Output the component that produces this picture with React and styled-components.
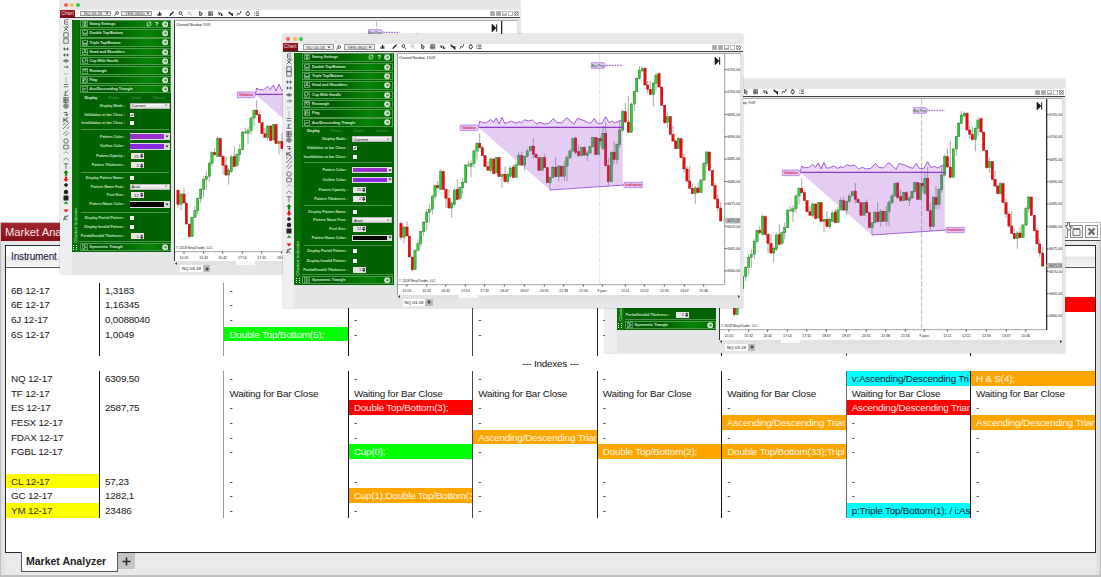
import React from "react";
import styled, { createGlobalStyle } from "styled-components";

const GlobalStyle = createGlobalStyle`
  * { box-sizing: border-box; }
  html, body { margin: 0; padding: 0; background: #fff; overflow: hidden; }
  body { font-family: "Liberation Sans", Arial, sans-serif; color: #111; }
  svg { display: block; }
`;

/* ---------- desktop ---------- */

const Desktop = styled.div`
  position: relative;
  width: 1101px;
  height: 577px;
  overflow: hidden;
  padding-top: 222px;
`;

/* ---------- market analyzer ---------- */

const Analyzer = styled.section`
  height: 355px;
  display: flex;
  flex-direction: column;
  border: 1px solid #bcbec0;
  border-bottom-width: 2px;
  background: linear-gradient(90deg, #dcdee0, #e9eaec 6px, #e9eaec 1094px, #d8dadc);
`;

const AnalyzerBar = styled.header`
  height: 18px;
  flex: none;
  display: flex;
  align-items: center;
  justify-content: space-between;
  background: #fff;
  border-bottom: 1px solid #44484a;
  padding-right: 2px;
`;

const AnalyzerTitle = styled.div`
  height: 18px;
  width: 96px;
  padding-left: 4px;
  line-height: 18px;
  font-size: 11.2px;
  white-space: nowrap;
  color: #f6e6e6;
  background: linear-gradient(#a3262e, #851019);
`;

const BarButtons = styled.div`
  display: flex;
  gap: 2px;
`;

const BarButton = styled.div`
  width: 13px;
  height: 13px;
  border: 1px solid #8b8b8b;
  background: #f3f3f3;
`;

const AnalyzerBody = styled.div`
  height: 308px;
  flex: none;
  margin: 4px 4px 0 4px;
  border: 1px solid #26282a;
  background: #fff;
`;

const HeaderRow = styled.div`
  height: 22px;
  border-bottom: 1px solid #55585a;
  background: linear-gradient(#fff 45%, #e6e6e6 55%, #f8f8f8);
  font-size: 10px;
  letter-spacing: -0.15px;
  line-height: 22px;
  padding-left: 5px;
  color: #0c0c3c;
`;

const Grid = styled.div`
  padding-top: 14.7px;
  font-size: 9.9px;
  letter-spacing: -0.2px;
`;

const Row = styled.div`
  height: 14.7px;
  display: grid;
  grid-template-columns: 93px repeat(8, 124.45px);
`;

const fills = {
  yellow: ["#ffff00", "#333300"],
  green: ["#00ff00", "#f4fff4"],
  red: ["#ff0000", "#ffeaea"],
  orange: ["#ffa500", "#fff6e4"],
  cyan: ["#00ffff", "#06202a"],
};

const Cell = styled.div`
  overflow: hidden;
  white-space: nowrap;
  line-height: 15.6px;
  padding-left: 5px;
  border-left: ${(p) => (p.$line ? `1px solid ${p.$line}` : "none")};
  background: ${(p) => (p.$fill ? fills[p.$fill][0] : "transparent")};
  color: ${(p) => (p.$fill ? fills[p.$fill][1] : "#161616")};
`;

const GroupRow = styled.div`
  height: 14.7px;
  line-height: 15.6px;
  text-align: center;
`;

const AnalyzerTabs = styled.div`
  display: flex;
  align-items: flex-start;
  margin: -1px 0 0 20px;
`;

const AnalyzerTab = styled.div`
  width: 97px;
  height: 20px;
  padding-left: 4px;
  border: 1px solid #55585a;
  border-top: none;
  background: #fff;
  font-size: 10.5px;
  font-weight: bold;
  line-height: 19px;
  color: #222;
`;

const AnalyzerPlus = styled.div`
  width: 17px;
  height: 16px;
  margin-top: 1px;
  background: #c2c3c5;
  display: grid;
  place-items: center;
`;

const D = "-";
const W = "Waiting for Bar Close";
const AD = "Ascending/Descending Trian";
const dashes = [D, D, D, D, D, D, D];
const waits = [W, W, W, W, W, W, W];

const rows = [
  { name: "6B 12-17", price: "1,3183", cells: dashes },
  { name: "6E 12-17", price: "1,16345", cells: [D, D, D, D, D, D, ["red", ""]] },
  { name: "6J 12-17", price: "0,0088040", cells: dashes },
  { name: "6S 12-17", price: "1,0049", cells: [["green", "Double Top/Bottom(5);"], D, D, D, D, D, D] },
  { cells: [] },
  { group: "--- Indexes ---" },
  { name: "NQ 12-17", price: "6309,50", cells: [D, D, D, D, D, ["cyan", "v:Ascending/Descending Tri"], ["orange", "H & S(4);"]] },
  { name: "TF 12-17", price: "", cells: waits },
  { name: "ES 12-17", price: "2587,75", cells: [D, ["red", "Double Top/Bottom(3);"], D, D, D, ["red", AD], D] },
  { name: "FESX 12-17", price: "", cells: [D, D, D, D, ["orange", AD], D, ["orange", AD]] },
  { name: "FDAX 12-17", price: "", cells: [D, D, ["orange", AD], D, D, D, D] },
  { name: "FGBL 12-17", price: "", cells: [D, ["green", "Cup(0);"], D, ["orange", "Double Top/Bottom(2);"], ["orange", "Double Top/Bottom(33);Tripl"], D, D] },
  { cells: [] },
  { name: "CL 12-17", mark: "yellow", price: "57,23", cells: dashes },
  { name: "GC 12-17", price: "1282,1", cells: [D, ["orange", "Cup(1);Double Top/Bottom(3"], D, D, D, D, D] },
  { name: "YM 12-17", mark: "yellow", price: "23486", cells: [D, D, D, D, D, ["cyan", "p:Triple Top/Bottom(1); / i:As"], D] },
];

const lineColors = ["#999", "#111", "#444", "#222", "#111", "#666", "#111"];

function MarketAnalyzer() {
  return (
    <Analyzer>
      <AnalyzerBar>
        <AnalyzerTitle>Market Analyzer</AnalyzerTitle>
        <BarButtons>
          <BarButton>
            <svg width="11" height="11" viewBox="0 0 11 11" fill="none" stroke="#777">
              <path d="M2 8.500h6" />
            </svg>
          </BarButton>
          <BarButton>
            <svg width="11" height="11" viewBox="0 0 11 11" fill="none" stroke="#777" overflow="visible">
              <path d="M2 3.500h7v6H2zM2 2.500h7" />
              <path d="M-3.500 -3.500v3l-2 0 3 5 4-3.500h-3v-4.500z" fill="#fff" stroke="#667" />
            </svg>
          </BarButton>
          <BarButton>
            <svg width="11" height="11" viewBox="0 0 11 11" stroke="#666" strokeWidth="2">
              <path d="M2.500 2.500l6 6M8.500 2.500l-6 6" />
            </svg>
          </BarButton>
        </BarButtons>
      </AnalyzerBar>
      <AnalyzerBody>
        <HeaderRow>Instrument</HeaderRow>
        <Grid>
          {rows.map((r, i) =>
            r.group ? (
              <GroupRow key={i}>{r.group}</GroupRow>
            ) : (
              <Row key={i}>
                <Cell $fill={r.mark}>{r.name}</Cell>
                <Cell $line="#111">{r.price}</Cell>
                {lineColors.map((line, c) => {
                  const v = r.cells[c];
                  const filled = Array.isArray(v);
                  return (
                    <Cell key={c} $line={line} $fill={filled ? v[0] : undefined}>
                      {filled ? v[1] : v}
                    </Cell>
                  );
                })}
              </Row>
            )
          )}
        </Grid>
      </AnalyzerBody>
      <AnalyzerTabs>
        <AnalyzerTab>Market Analyzer</AnalyzerTab>
        <AnalyzerPlus>
          <svg width="9" height="9" viewBox="0 0 9 9" stroke="#2b2b2b" strokeWidth="1.6">
            <path d="M4.500 .5v8M.5 4.500h8" />
          </svg>
        </AnalyzerPlus>
      </AnalyzerTabs>
    </Analyzer>
  );
}

/* ---------- chart window frame ---------- */

const Frame = styled.section`
  position: absolute;
  left: ${(p) => p.$x}px;
  top: ${(p) => p.$y}px;
  width: 460px;
  height: 274px;
  display: flex;
  flex-direction: column;
  overflow: hidden;
  border-radius: 2px;
  background: #e5e6e8;
  box-shadow: 0 0 1.5px rgba(0, 0, 0, 0.45);
`;

const TitleBar = styled.div`
  height: 10px;
  flex: none;
  display: flex;
  align-items: center;
  gap: 2.3px;
  padding-left: 3.8px;
  background: #e7e7e7;
`;

const Dot = styled.i`
  width: 4px;
  height: 4px;
  border-radius: 50%;
  background: ${(p) => p.$color};
`;

const Toolbar = styled.div`
  height: 8px;
  flex: none;
  display: flex;
  align-items: center;
  background: #fff;
  border-bottom: 1px solid #3c463c;
`;

const ChartTag = styled.div`
  width: 15px;
  height: 8px;
  margin-right: 5px;
  background: linear-gradient(#9c1c28, #7a0c16);
  color: #f0d8da;
  font-size: 5.2px;
  line-height: 7.5px;
  text-align: center;
`;

const Picker = styled.div`
  width: 31px;
  height: 5.6px;
  display: flex;
  align-items: center;
  justify-content: space-between;
  padding: 0 1.5px 0 3px;
  border: 0.6px solid #999;
  background: #f0f0f0;
  font-size: 4.2px;
  white-space: nowrap;
  color: #333;
`;

const Find = styled.div`
  width: 10px;
  display: grid;
  place-items: center;
`;

const ToolSlot = styled.div`
  width: ${(p) => p.$w}px;
  display: flex;
  justify-content: flex-end;
`;

const WinButtons = styled.div`
  margin-left: auto;
  display: flex;
  gap: 1px;
  padding-right: 1.5px;
`;

const WinButton = styled.i`
  width: 5px;
  height: 5px;
  border: 0.6px solid #b4b4b4;
  background: ${(p) => (p.$solid ? "#a8a8a8" : "#fff")};
  display: grid;
  place-items: center;
`;

const FrameBody = styled.div`
  flex: 1;
  min-height: 0;
  display: flex;
`;

const Strip = styled.div`
  width: 11.5px;
  flex: none;
  padding: 1.3px 0 0 1px;
  display: flex;
  flex-direction: column;
  align-items: center;
  background: #eceef0;
`;

const StripIcon = styled.svg`
  width: 6px;
  height: 6px;
  flex: none;
  margin-top: ${(p) => p.$gap}px;
`;

const Arrow = ({ color = "#444" }) => (
  <svg width="4" height="3" viewBox="0 0 4 3">
    <path d="M.4.5h3.200L2 2.600z" fill={color} />
  </svg>
);

const toolbarIcons = [
  [10.5, "M1.500 7V4M3.500 7V1M5.500 7V2.500", 1.6],
  [12, "M1 7L6 1.500M1.500 7l1-2.500L7 1", 1.6],
  [9, "M1.500 3a2 2 0 1 0 4 0a2 2 0 1 0-4 0M5 5l3 3", 1.2],
  [9, "M1.500 3a2 2 0 1 0 4 0a2 2 0 1 0-4 0M5 5l3 3", 0.4],
  [10.5, "M2.500 0.500v6L4 5.500l1.500 2.500M2.500.5l4 4H4.500", 1.3],
  [10, "M1 1h6v6H1zM1 3h6M1 5h6M3 1v6", 0.9],
  [10, "M0 3h4M4 6h4M1 5h2M5 3v4", 1.4],
  [10, "M1 1l3 3M4 4h3v3zM2 1v3", 1.8],
  [8.5, "M1 7l2-4 2 2 2-4M6 1h2", 1.1],
  [9, "M1.500 4a2.500 2.500 0 1 0 5 0a2.500 2.500 0 1 0-5 0M3 1h2M3 7h2", 1.2],
  [8.5, "M0 1.500h1M2.500 1.500H8M0 4h1M2.500 4H8M0 6.500h1M2.500 6.500H8", 1],
];

const stripIcons = [
  [0, "M2 1v6M3 1h4M3 4h4M3 7h4"],
  [0.4, "M1 1l6 6M7 1L1 7M3 1h4"],
  [0.6, "M1 1h6v6H1z"],
  [-0.3, "M1 1h6v6H1z"],
  [2, "M0 4h8M2 2v4M6 2v4"],
  [0, "M0 4h8M2 2v4M6 2v4"],
  [0.3, "M0 4h8M1 4l2-2v4M7 4L5 2v4"],
  [0, "M1 4h6M5 2l2 2-2 2"],
  [1, "M1 4h6", "#999"],
  [0, "M4 0v8", "#999"],
  [0, "M1 2h6M1 5h6"],
  [0.7, "M1 7h6M3 1v6M3 4l4-3"],
  [1.3, "M0 1h8M0 3h8M0 5h8M0 7h8M3 0v8"],
  [0, "M1 4a3 3 0 1 0 6 0a3 3 0 1 0-6 0M1 4h6M4 1v6"],
  [2, "M1 2h4M5 1v6M2 5h5"],
  [0, "M1 1v6M1 4l6-3M1 4l6 3M3 2l3 4"],
  [0, "M0 3l3-3M0 8l8-8M5 8l3-3"],
  [0.4, "M0 6l5-5M3 8l5-5"],
  [2, "M1 4a3 3 0 1 0 6 0a3 3 0 1 0-6 0"],
  [0.3, "M1 1.500h6v5H1z"],
  [-0.3, "M1 5l3-3 3 3", "#777"],
  [0, "M1 6c1-4 5-4 6 0", "#555"],
  [1, "M1 1h6M4 1v7"],
  [1.6, "M4 0l3.500 4H5.500v3.500h-3V4H.5z", "#078a07", true],
  [0, "M4 8l3.500-4H5.500V.5h-3V4H.5z", "#ee1111", true],
  [0, "M4 1l3 3-3 3-3-3z", "#222", true],
  [0.4, "M1 4a3 3 0 1 0 6 0a3 3 0 1 0-6 0", "#222", true],
  [0, "M.7 .7h6.600v6.600h-6.600z", "#222", true],
  [-0.4, "M4 1.500l3 3.500h-6z", "#078a07", true],
  [2, "M4 6l3.500-4h-7z", "#ee1111", true],
  [0.7, "M1 7l5-6M2 4l4 3M1 7l1-5 5-1"],
];

/* ---------- indicator panel ---------- */

const Panel = styled.aside`
  width: 99.5px;
  height: 232px;
  margin-top: 1.5px;
  flex: none;
  display: flex;
  background: #006200;
`;

const Spine = styled.div`
  width: 7px;
  display: flex;
  flex-direction: column;
  align-items: center;
  justify-content: flex-end;
  gap: 2px;
  padding-bottom: 2px;
  background: #067206;
`;

const SpineText = styled.div`
  writing-mode: vertical-rl;
  transform: rotate(180deg);
  font-size: 4.3px;
  line-height: 5px;
  letter-spacing: 0.1px;
  color: #d0ecd0;
  white-space: nowrap;
`;

const Sections = styled.div`
  flex: 1;
  min-width: 0;
  display: flex;
  flex-direction: column;
  padding: 0.3px 0.5px 0 1px;
`;

const SectionHead = styled.div`
  height: 8.4px;
  margin-bottom: 0.93px;
  flex: none;
  display: flex;
  align-items: center;
  gap: 2px;
  padding: 0 1.2px 0 1px;
  border: 0.6px solid #4f9c4f;
  background: linear-gradient(95deg, #005a00 35%, #078507 75%, #006800);
  color: #d8f0d8;
  font-size: 3.65px;
  font-weight: bold;
  white-space: nowrap;
`;

const HeadTools = styled.div`
  margin-left: auto;
  display: flex;
  align-items: center;
  gap: 3.5px;
`;

const Help = styled.b`
  font-size: 5.5px;
  color: #fff;
`;

const TabRow = styled.div`
  height: 7.4px;
  flex: none;
  display: grid;
  grid-template-columns: repeat(4, 1fr);
  align-items: center;
  text-align: center;
  font-size: 3.6px;
  font-weight: bold;
`;

const PanelTab = styled.span`
  color: ${(p) => (p.$on ? "#e8ffe8" : "#378f37")};
`;

const Field = styled.div`
  height: ${(p) => p.$h}px;
  flex: none;
  display: grid;
  grid-template-columns: 45.5px 1fr;
  column-gap: 4.5px;
  align-items: center;
`;

const FieldLabel = styled.span`
  font-size: 3.6px;
  font-weight: bold;
  white-space: nowrap;
  display: flex;
  justify-content: flex-end;
  color: #c8e8c8;
`;

const Rule = styled.div`
  height: 1px;
  flex: none;
  margin: ${(p) => p.$m};
  background: #4f944f;
`;

const SelectBox = styled.div`
  width: 40px;
  height: 6px;
  display: flex;
  align-items: center;
  justify-content: space-between;
  padding: 0 1px;
  border: 0.5px solid #bbb;
  background: linear-gradient(#fafafa, #dcdcdc);
  color: #111;
  font-size: 4.2px;
`;

const Check = styled.div`
  width: 4px;
  height: 4px;
  margin-left: 0.5px;
  background: #fff;
  display: grid;
  place-items: center;
`;

const Spin = styled.div`
  width: 13px;
  height: 6px;
  display: flex;
  align-items: center;
  justify-content: flex-end;
  gap: 1px;
  padding-right: 0.4px;
  margin-left: 1px;
  background: #e6e6e6;
  color: #222;
  font-size: 4px;
`;

const ColorBox = styled.div`
  width: 40px;
  height: 6.6px;
  display: flex;
  align-items: center;
  background: #ddd;
`;

const Swatch = styled.div`
  width: 34px;
  height: 4.6px;
  flex: none;
  margin: 0 1px 0 0.8px;
  background: ${(p) => p.$color};
`;

const Gear = () => (
  <svg width="6.4" height="6.4" viewBox="0 0 8 8">
    <circle cx="4" cy="4" r="3.800" fill="#d4e6d4" />
    <path d="M2.200 4h3.600M4 2.200L5.800 4 4 5.800" fill="none" stroke="#286028" strokeWidth="0.9" />
  </svg>
);

const HeadIcon = ({ d }) => (
  <svg width="6" height="6" viewBox="0 0 8 8" fill="none" stroke="#d0ead0" strokeWidth="0.9">
    <path d="M.6.6h6.800v6.800H.6z" strokeWidth="0.6" />
    <path d={d} />
  </svg>
);

const sections = [
  ["Swing Settings", "M2 2h4M2 4h4M2 6h4M4 1v6"],
  ["Double Top/Bottom", "M1 2l2 4 1-2 1 2 2-4"],
  ["Triple Top/Bottom", "M1 2l1 4 1-2 1 2 1-2 1 2 1-4"],
  ["Head and Shoulders", "M1 6l1-2 1 1 1-4 1 4 1-1 1 2"],
  ["Cup With Handle", "M1 2c1 5 3 5 4 0l2 2"],
  ["Rectangle", "M1 5l2-2 2 2 2-2M1 2h6"],
  ["Flag", "M2 7V2l4 1-4 2M5 6l2-1"],
  ["Asc/Descending Triangle", "M1 6l2-3 1 2 3-3"],
];

function Head({ label, d, first }) {
  return (
    <SectionHead>
      <HeadIcon d={d} />
      {label}
      <HeadTools>
        {first && (
          <>
            <svg width="6" height="6" viewBox="0 0 8 8" fill="none" stroke="#d8f0d8" strokeWidth="1">
              <path d="M1.200 4a2.800 2.800 0 0 1 5-1.600M6.800 4a2.800 2.800 0 0 1-5 1.600M6.500 1v2h-2M1.500 7V5h2" />
            </svg>
            <Help>?</Help>
          </>
        )}
        <Gear />
      </HeadTools>
    </SectionHead>
  );
}

function LabeledField({ label, h, children }) {
  return (
    <Field $h={h}>
      <FieldLabel>{label} :</FieldLabel>
      {children}
    </Field>
  );
}

const Checkbox = ({ on }) => (
  <Check>
    {on && (
      <svg width="4" height="4" viewBox="0 0 4 4" fill="none" stroke="#000" strokeWidth="0.8">
        <path d="M.6 2l1 1L3.400.8" />
      </svg>
    )}
  </Check>
);

const Stepper = ({ value }) => (
  <Spin>
    {value}
    <svg width="3.500" height="5.500" viewBox="0 0 4 6">
      <path d="M0 2.600L2 .3l2 2.300zM0 3.400h4L2 5.700z" fill="#222" />
    </svg>
  </Spin>
);

const ColorPick = ({ color }) => (
  <ColorBox>
    <Swatch $color={color} />
    <Arrow color="#222" />
  </ColorBox>
);

function IndicatorPanel() {
  return (
    <Panel>
      <Spine>
        <SpineText>Charted Indicator</SpineText>
        <svg width="4" height="5" viewBox="0 0 4 5" fill="#e8ffe8">
          <path d="M0 0h1v1H0zM3 0h1v1H3zM0 2h1v1H0zM3 2h1v1H3zM0 4h1v1H0zM3 4h1v1H3z" />
        </svg>
      </Spine>
      <Sections>
        {sections.map(([label, d], i) => (
          <Head key={label} label={label} d={d} first={i === 0} />
        ))}
        <TabRow>
          <PanelTab $on>Display</PanelTab>
          <PanelTab>Points</PanelTab>
          <PanelTab>Guide</PanelTab>
          <PanelTab>Volume</PanelTab>
        </TabRow>
        <LabeledField label="Display Mode" h={8.6}>
          <SelectBox>
            Current <Arrow color="#999" />
          </SelectBox>
        </LabeledField>
        <LabeledField label="Validation at bar Close" h={8.6}>
          <Checkbox on />
        </LabeledField>
        <LabeledField label="Invalidation at bar Close" h={8.8}>
          <Checkbox />
        </LabeledField>
        <Rule $m="1.2px 1.5px 1.8px" />
        <LabeledField label="Pattern Color" h={9.8}>
          <ColorPick color="#9932cc" />
        </LabeledField>
        <LabeledField label="Outline Color" h={9.8}>
          <ColorPick color="#8a2be2" />
        </LabeledField>
        <LabeledField label="Pattern Opacity" h={9.5}>
          <Stepper value="25" />
        </LabeledField>
        <LabeledField label="Pattern Thickness" h={9.3}>
          <Stepper value="2" />
        </LabeledField>
        <Rule $m="1.8px 1.5px 1.2px" />
        <LabeledField label="Display Pattern Name" h={8.6}>
          <Checkbox />
        </LabeledField>
        <LabeledField label="Pattern Name Font" h={8.3}>
          <SelectBox>
            Arial <Arrow color="#999" />
          </SelectBox>
        </LabeledField>
        <LabeledField label="Font Size" h={8.5}>
          <Stepper value="12" />
        </LabeledField>
        <LabeledField label="Pattern Name Color" h={10}>
          <ColorPick color="#000" />
        </LabeledField>
        <Rule $m="2.2px 1.5px 0.8px" />
        <LabeledField label="Display Partial Pattern" h={9}>
          <Checkbox />
        </LabeledField>
        <LabeledField label="Display Invalid Pattern" h={9.2}>
          <Checkbox />
        </LabeledField>
        <LabeledField label="Partial/Invalid Thickness" h={9.4}>
          <Stepper value="1" />
        </LabeledField>
        <Rule $m="0 0 0.6px" />
        <Head label="Symmetric Triangle" d="M1 1l5 3-5 3M3 3v2" />
      </Sections>
    </Panel>
  );
}

/* ---------- price chart ---------- */

const ChartColumn = styled.div`
  width: 344px;
  margin: 1.5px 0 0 3.3px;
  display: flex;
  flex-direction: column;
`;

const ChartBox = styled.div`
  height: 241.5px;
  border-top: 0.7px solid #aaa;
  border-left: 0.8px solid ${(p) => p.$edge};
  background: #fff;
`;

const Scroll = styled.div`
  height: 4px;
  flex: none;
  display: flex;
  align-items: center;
  justify-content: space-between;
  padding: 0 1px;
  background: #e2e2e2;
`;

const Thumb = styled.div`
  width: 19px;
  height: 3.6px;
  margin-left: 59px;
  margin-right: auto;
  background: #fafafa;
`;

const Tabs = styled.div`
  display: flex;
  padding-left: 6px;
`;

const Tab = styled.div`
  width: 22.5px;
  height: 7px;
  background: #fff;
  font-size: 4.4px;
  line-height: 7px;
  text-align: center;
  color: #111;
`;

const TabPlus = styled.div`
  width: 7.5px;
  height: 7px;
  display: grid;
  place-items: center;
  background: #bcbcbc;
`;

/* each bar: x, open, close, high, low (y grows downwards, so a rising bar closes at a smaller value) */
const bars = [
  [18, 577, 619, 572, 628], [27, 619, 588, 585, 638], [36, 588, 615, 570, 615], [43, 615, 678, 615, 680],
  [52, 678, 716, 678, 722], [60, 716, 658, 655, 716], [69, 658, 638, 625, 660], [77, 638, 602, 600, 648],
  [86, 602, 574, 570, 615], [95, 574, 544, 535, 598], [103, 544, 535, 520, 575], [112, 535, 496, 490, 550],
  [120, 496, 464, 460, 505], [128, 464, 470, 450, 475], [137, 475, 422, 415, 478], [145, 422, 475, 418, 478],
  [153, 475, 502, 470, 530], [162, 502, 531, 475, 534], [170, 531, 517, 510, 560], [178, 520, 477, 470, 525],
  [187, 475, 506, 445, 508], [195, 502, 470, 465, 508], [203, 470, 455, 440, 490], [212, 455, 402, 400, 456],
  [220, 404, 402, 390, 408], [228, 406, 398, 388, 438], [237, 398, 360, 355, 410], [246, 360, 337, 333, 385],
  [254, 337, 350, 307, 352], [262, 350, 374, 342, 375], [270, 374, 407, 372, 408], [279, 407, 418, 390, 418],
  [287, 418, 384, 380, 425], [296, 384, 428, 382, 430], [305, 426, 380, 378, 426], [312, 380, 437, 378, 438],
  [321, 437, 430, 428, 470], [330, 430, 452, 405, 454], [338, 452, 430, 425, 458], [346, 436, 411, 405, 440],
  [355, 408, 440, 400, 442], [363, 440, 402, 392, 440], [371, 402, 374, 365, 403], [380, 374, 402, 362, 405],
  [389, 402, 376, 374, 418], [397, 376, 360, 353, 380], [406, 360, 347, 345, 360], [415, 345, 370, 321, 382],
  [423, 370, 380, 365, 380], [432, 380, 418, 378, 420], [441, 418, 380, 378, 418], [449, 380, 410, 370, 412],
  [457, 410, 455, 408, 456], [465, 455, 440, 438, 478], [473, 440, 409, 405, 441], [482, 409, 437, 378, 440],
  [491, 437, 406, 400, 452], [499, 406, 436, 402, 438], [508, 436, 406, 390, 450], [516, 406, 380, 372, 450],
  [525, 380, 360, 354, 385], [534, 360, 323, 320, 362], [542, 321, 364, 317, 370], [551, 362, 374, 340, 378],
  [560, 374, 350, 347, 376], [568, 350, 372, 345, 375], [577, 374, 366, 360, 390], [585, 366, 346, 345, 368],
  [593, 346, 320, 318, 350], [602, 320, 370, 318, 372], [610, 370, 323, 320, 372], [616, 323, 330, 318, 345],
  [624, 353, 307, 286, 356], [632, 307, 404, 273, 406], [640, 404, 452, 380, 464], [649, 452, 364, 360, 455],
  [657, 364, 386, 330, 400], [666, 386, 340, 337, 400], [674, 340, 297, 268, 350], [683, 297, 242, 235, 302],
  [691, 242, 273, 215, 275], [700, 273, 304, 194, 306], [709, 304, 219, 215, 305], [718, 219, 182, 180, 240],
  [725, 182, 142, 138, 182], [733, 142, 117, 105, 145], [742, 120, 113, 107, 122], [750, 112, 162, 108, 164],
  [758, 162, 175, 150, 188], [766, 175, 191, 150, 194], [775, 191, 157, 152, 226], [783, 157, 132, 125, 180],
  [792, 128, 168, 124, 170], [800, 168, 223, 168, 224], [809, 223, 275, 222, 280], [817, 275, 257, 245, 290],
  [826, 257, 310, 255, 313], [834, 310, 330, 285, 334], [842, 330, 353, 325, 355], [850, 353, 323, 318, 355],
  [858, 323, 380, 320, 382], [867, 380, 414, 368, 425], [876, 414, 450, 405, 455], [884, 450, 472, 405, 473],
  [892, 472, 488, 458, 490], [901, 488, 471, 465, 518], [909, 471, 485, 455, 487], [918, 485, 447, 444, 485],
  [927, 447, 397, 392, 450], [935, 397, 363, 360, 408], [943, 363, 418, 362, 420], [952, 418, 464, 417, 466],
  [960, 464, 504, 456, 505], [968, 504, 531, 490, 542], [977, 531, 570, 514, 572],
];

const wave =
  "250,289 254,270 262,275 275,275 287,265 295,274 304,261 312,279 321,259 329,277 338,275 350,270 362,277 372,272 380,275 388,266 400,270 412,267 425,279 435,274 448,279 462,277 475,262 485,274 500,276 515,260 525,268 537,280 547,262 565,268 577,274 587,277 598,262 607,277 621,277 632,257 642,275 652,271 662,276 672,270 683,268";

const times = [
  [36, "15:05"], [95, "15:32"], [152, "16:42"], [211, "17:14"], [269, "17:32"], [328, "18:47"], [388, "19:47"],
  [448, "20:31"], [506, "21:38"], [565, "21:56"], [622, "9 janv."], [691, "11:11"], [748, "12:22"], [808, "12:33"],
  [868, "13:47"], [926, "15:46"],
];
const prices = ["6705,00", "6700,00", "6695,00", "6690,00", "6685,00", "6680,00", "6675,00", "6670,00", "6665,00", "6660,00"];

const ChartText = styled.text`
  font-family: "Liberation Sans", Arial, sans-serif;
  font-size: ${(p) => p.$size || 11}px;
  font-weight: ${(p) => (p.$bold ? "bold" : "normal")};
  text-anchor: ${(p) => p.$anchor || "start"};
  fill: ${(p) => p.$color || "#111"};
`;

function PriceChart({ axis, stamp }) {
  return (
    <svg width="343" height="241" viewBox="9 69 1029 723">
      <rect x="1036" y="69" width="4" height="723" fill="#cfcfcf" />
      <line x1="614" y1="70" x2="614" y2="760" stroke={axis === "#111" ? "#aaa" : "#d8d8d8"} strokeWidth="2.500" strokeDasharray="16 5" />
      {bars.map(([x, o, c, h, l]) => (
        <g key={x}>
          <line x1={x} x2={x} y1={h} y2={l} stroke="#666" strokeWidth="1.700" />
          <rect
            x={x - 3.5}
            y={Math.min(o, c)}
            width="7"
            height={Math.max(Math.abs(o - c), 2)}
            fill={c < o ? "#32cd32" : "#fa0505"}
            stroke={c < o ? "#1f5f1f" : "#7a1010"}
            strokeWidth="1.100"
          />
        </g>
      ))}
      <polygon points="250,289 683,289 683,462 465,477" fill="#9932cc" fillOpacity="0.25" />
      <polygon points={wave + " 683,289"} fill="#9932cc" fillOpacity="0.2" />
      <polyline points={wave} fill="none" stroke="#9a52d2" strokeWidth="2.800" />
      <path d="M250 289H687" stroke="#8a3cc8" strokeWidth="3.500" />
      <path d="M465 477L687 462" stroke="#a060dc" strokeWidth="3" />
      <path d="M196 282h50l6 8-6 9h-50z" fill="#e6c8f4" stroke="#a468dc" strokeWidth="2" />
      <ChartText x="222" y="294" $size={9} $bold $anchor="middle" $color="#d8104c">Validation</ChartText>
      <path d="M684 462l5-8h53v16h-53z" fill="#e6c8f4" stroke="#a468dc" strokeWidth="2" />
      <ChartText x="715" y="466" $size={9} $bold $anchor="middle" $color="#d8104c">Invalidation</ChartText>
      <path d="M589 95h38l6 8-6 9h-38z" fill="#e6c8f4" stroke="#a468dc" strokeWidth="2" />
      <ChartText x="609" y="107" $size={8.5} $bold $anchor="middle" $color="#3f7d52">Buy Prep</ChartText>
      <path d="M634 103H683" stroke="#8a4cc8" strokeWidth="3" strokeDasharray="5 3" />
      <path d="M961 79v22M974 79v22M961 80l10 10-10 10z" fill="#111" stroke="#111" strokeWidth="3" />
      <ChartText x="12" y="83" $size={10.5}>{stamp}</ChartText>
      <ChartText x="12" y="753" $size={10}>© 2018 NinjaTrader, LLC</ChartText>
      <path d="M9 761H989" stroke="#777" strokeWidth="2" />
      <path d="M989 69V762" stroke={axis} strokeWidth="3.500" />
      {times.map(([x, t]) => (
        <g key={x}>
          <path d={`M${x} 761v6`} stroke="#333" strokeWidth="2.500" />
          <ChartText x={x} y="782" $size={10.5} $anchor="middle">{t}</ChartText>
        </g>
      ))}
      {prices.map((p, i) => (
        <g key={p}>
          <path d={`M989 ${116 + i * 67.1}h6`} stroke="#333" strokeWidth="2.500" />
          <ChartText x="997" y={120 + i * 67.1} $size={10.8}>{p}</ChartText>
        </g>
      ))}
      <path d="M986 569l8-7h40v14h-40z" fill="#c4c4c4" stroke="#777" strokeWidth="1.500" />
      <ChartText x="997" y="573" $size={10.5} $color="#333">6671,25</ChartText>
    </svg>
  );
}

function ChartWindow({ x, y, axis, stamp }) {
  return (
    <Frame $x={x} $y={y}>
      <TitleBar>
        <Dot $color="#fc5b57" />
        <Dot $color="#fdbc40" />
        <Dot $color="#2fc840" />
      </TitleBar>
      <Toolbar>
        <ChartTag>Chart</ChartTag>
        <Picker>NQ 03-18 <Arrow /></Picker>
        <Find>
          <svg width="5" height="5" viewBox="0 0 8 8" fill="none" stroke="#333" strokeWidth="1.300">
            <circle cx="5" cy="3" r="2.200" />
            <path d="M3.500 4.500L.5 7.500" />
          </svg>
        </Find>
        <Picker>YEN (800) <Arrow /></Picker>
        {toolbarIcons.map(([w, d, s], i) => (
          <ToolSlot key={i} $w={w}>
            <svg width="5.500" height="5.500" viewBox="0 0 8 8" fill="none" stroke="#222" strokeWidth={s}>
              <path d={d} />
            </svg>
          </ToolSlot>
        ))}
        <WinButtons>
          <WinButton $solid />
          <WinButton $solid />
          <WinButton>
            <svg width="3" height="3" viewBox="0 0 4 4" stroke="#666"><path d="M0 3h4" /></svg>
          </WinButton>
          <WinButton />
          <WinButton>
            <svg width="3" height="3" viewBox="0 0 4 4" stroke="#555"><path d="M0 0l4 4M4 0L0 4" /></svg>
          </WinButton>
        </WinButtons>
      </Toolbar>
      <FrameBody>
        <Strip>
          {stripIcons.map(([gap, d, color = "#333", solid], i) => (
            <StripIcon key={i} $gap={gap} viewBox="0 0 8 8" fill={solid ? color : "none"} stroke={solid ? "none" : color} strokeWidth="0.9">
              <path d={d} />
            </StripIcon>
          ))}
        </Strip>
        <IndicatorPanel />
        <ChartColumn>
          <ChartBox $edge={axis === "#111" ? "#333" : "#999"}>
            <PriceChart axis={axis} stamp={stamp} />
          </ChartBox>
          <Scroll>
            <svg width="2" height="3" viewBox="0 0 2 3"><path d="M2 0v3L0 1.500z" fill="#333" /></svg>
            <Thumb />
            <svg width="2" height="3" viewBox="0 0 2 3"><path d="M0 0v3l2-1.500z" fill="#333" /></svg>
          </Scroll>
          <Tabs>
            <Tab>NQ 03-18</Tab>
            <TabPlus>
              <svg width="4" height="4" viewBox="0 0 4 4" stroke="#222" strokeWidth="0.8"><path d="M2 0v4M0 2h4" /></svg>
            </TabPlus>
          </Tabs>
        </ChartColumn>
      </FrameBody>
    </Frame>
  );
}

export default function App() {
  return (
    <>
      <GlobalStyle />
      <Desktop>
        <MarketAnalyzer />
        <ChartWindow x={605} y={78.5} axis="#111" stamp="Charted Nasdaq: 9.09" />
        <ChartWindow x={60} y={0} axis="#111" stamp="Charted Nasdaq: 9.09" />
        <ChartWindow x={282.5} y={33.5} axis="#aaa" stamp="Charted Nasdaq: 13.09" />
      </Desktop>
    </>
  );
}
